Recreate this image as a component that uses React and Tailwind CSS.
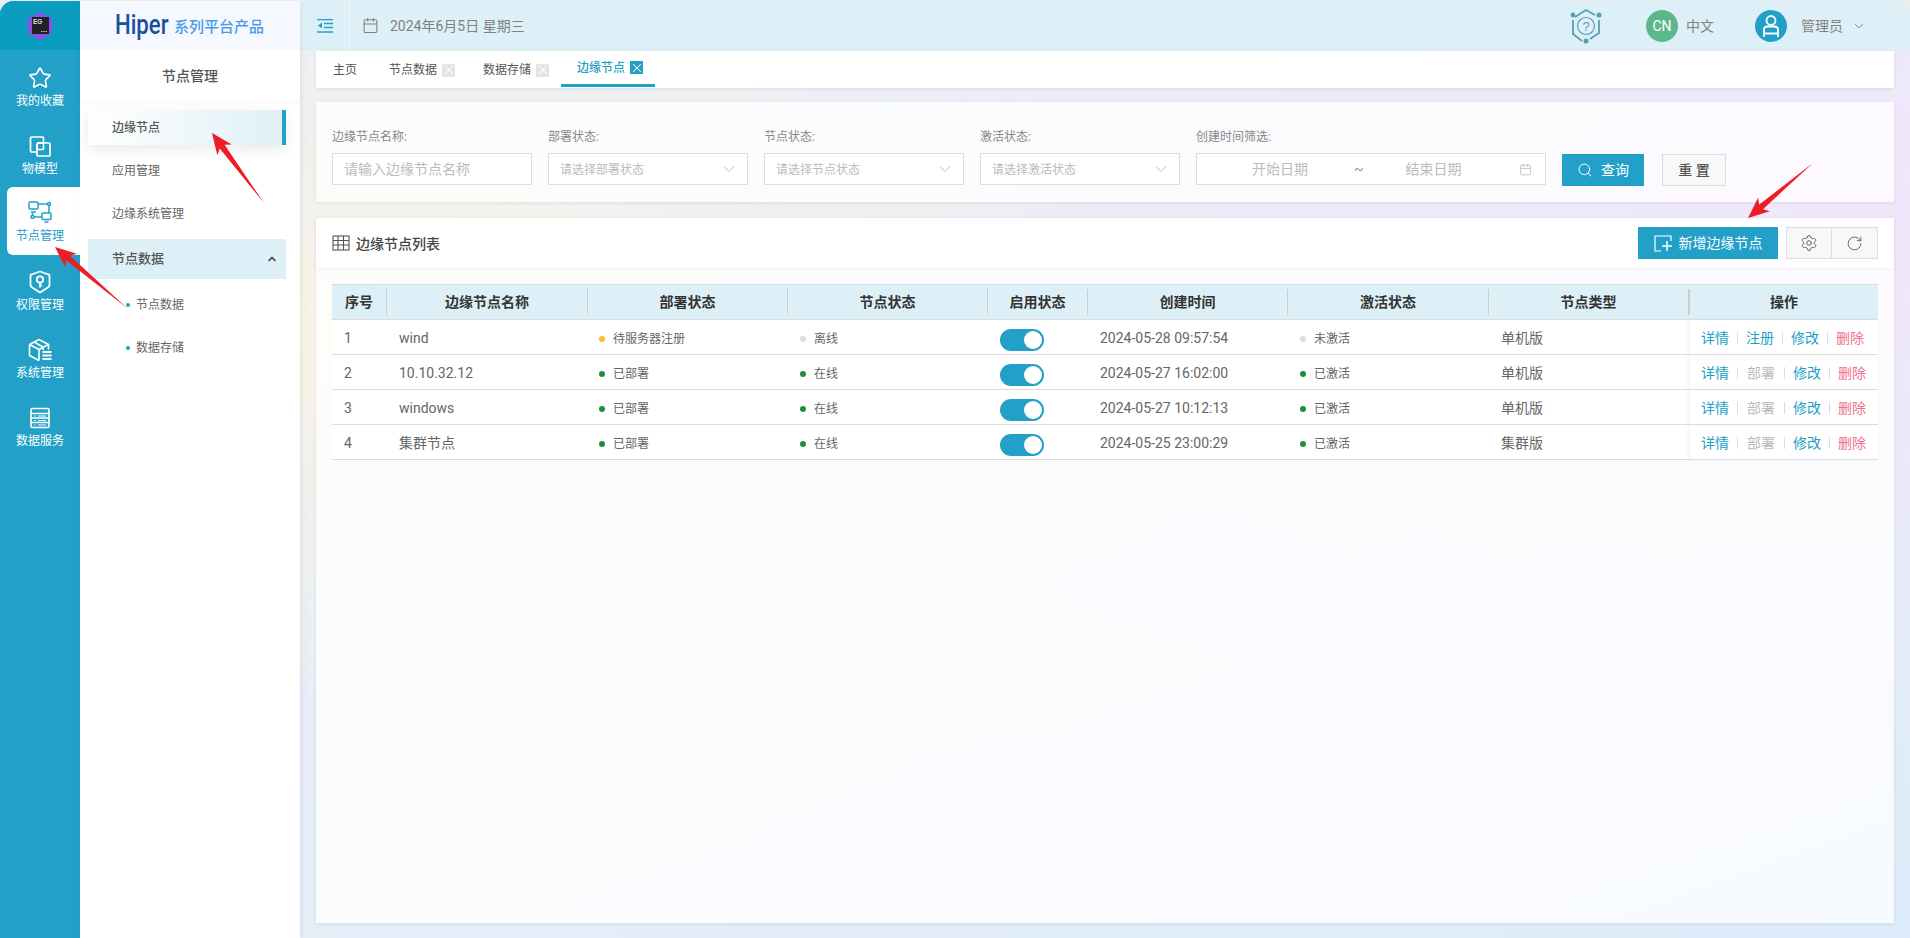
import { Star, ChevronDown, ChevronUp, Search, Settings, RotateCw, X, Calendar } from 'lucide-react';

const IconModel = () => (
  <svg width="24" height="24" viewBox="0 0 24 24" fill="none" stroke="currentColor" strokeWidth="1.7" strokeLinejoin="round">
    <path d="M9 18H3.500a1 1 0 0 1-1-1V4a1 1 0 0 1 1-1h11a1 1 0 0 1 1 1v5" />
    <path d="M9.500 9h11.500a1 1 0 0 1 1 1v11a1 1 0 0 1-1 1H10a1 1 0 0 1-1-1V10" />
    <rect x="9" y="9" width="6.500" height="6.500" rx="1" />
  </svg>
);

const IconNodes = () => (
  <svg width="24" height="24" viewBox="0 0 24 24" fill="none" stroke="currentColor" strokeWidth="1.5">
    <rect x="1" y="2" width="9" height="7" rx="1" />
    <path d="M3 12h5" />
    <path d="M5.500 9v1" />
    <path d="M10 4h10" />
    <circle cx="21" cy="4" r="1.500" />
    <path d="M21 6v7" />
    <rect x="14" y="13" width="9" height="6.500" rx="1" />
    <path d="M16.500 22h4" />
    <path d="M14 17H6" />
    <circle cx="4.500" cy="17" r="1.500" />
    <path d="M4.500 15.500v-3" />
  </svg>
);

const IconShield = () => (
  <svg width="24" height="24" viewBox="0 0 24 24" fill="none" stroke="currentColor" strokeWidth="1.8" strokeLinejoin="round">
    <path d="M12 1.500 20.500 4.500a1 1 0 0 1 1 1V15c0 1-.5 1.800-1.300 2.300L12 22.500 3.800 17.300C3 16.800 2.500 16 2.500 15V5.500a1 1 0 0 1 1-1Z" />
    <circle cx="12" cy="9.500" r="3.200" />
    <path d="M12 12.700V17.500M12 15.500h2" />
  </svg>
);

const IconCube = () => (
  <svg width="24" height="24" viewBox="0 0 24 24" fill="none" stroke="currentColor" strokeWidth="1.6" strokeLinejoin="round">
    <path d="M11 22.500 1.500 17.500V6.500L11 1.500l9.500 5v5" />
    <path d="M1.500 6.500 11 11.500l9.500-5" />
    <path d="M11 11.500v11" />
    <path d="M14.500 14h9M14.500 17.500h9M14.500 21h9" strokeWidth="1.800" />
    <path d="m6 4 9 5v3" />
  </svg>
);

const IconData = () => (
  <svg width="24" height="24" viewBox="0 0 24 24" fill="none" stroke="currentColor" strokeWidth="1.6">
    <rect x="3" y="2.500" width="18" height="19" rx="1.500" />
    <path d="M3 7.500h18M3 12h18M3 16.500h18" />
    <path d="M6 10h1.500M10 10h8M6 14.500h1.500M10 14.500h8M6 19h1.500M10 19h8" strokeWidth="1.200" />
  </svg>
);

const railItems = [
  { label: '我的收藏', icon: <Star size={24} strokeWidth={1.6} /> },
  { label: '物模型', icon: <IconModel /> },
  { label: '节点管理', icon: <IconNodes />, active: true },
  { label: '权限管理', icon: <IconShield /> },
  { label: '系统管理', icon: <IconCube /> },
  { label: '数据服务', icon: <IconData /> },
];

const Rail = () => (
  <div className="w-20 shrink-0 bg-[#22a0c8] flex flex-col">
    <div className="h-[49px] mb-px bg-[#0a9dbf] flex items-center justify-center">
      <svg width="24" height="28" viewBox="0 0 24 28">
        <polygon points="12,0 24,7 24,21 12,28 0,21 0,7" fill="#8b4fe8" />
        <rect x="4" y="5" width="17" height="17" fill="#222" />
        <text x="5" y="12" fontSize="6.500" fontWeight="700" fill="#ddd" fontFamily="Liberation Sans">EG</text>
        <path d="M13 19.500h6" stroke="#bbb" strokeWidth="1" strokeDasharray="1.500 .7" />
      </svg>
    </div>
    {railItems.map((item) => (
      <div
        key={item.label}
        className={
          item.active
            ? 'h-[68px] ml-[7px] pr-[7px] pt-[13px] bg-white rounded-l-md text-[#22a0c8] flex flex-col items-center'
            : 'h-[68px] pt-[15px] text-white flex flex-col items-center'
        }
      >
        {item.icon}
        <span className={item.active ? 'mt-1 text-xs leading-4' : 'mt-[3px] text-xs leading-4'}>{item.label}</span>
      </div>
    ))}
  </div>
);

const SubPanel = () => (
  <div className="w-[220px] shrink-0 bg-white flex flex-col relative z-10 shadow-[2px_0_6px_rgba(0,0,0,0.06)]">
    <div className="h-[49px] bg-[#f5f9ff] flex items-center pl-[35px]">
      <span className="w-[59px] text-[#1a4f9c] text-[27px] leading-none font-medium scale-x-[0.82] origin-left">Hiper</span>
      <span className="text-[15px] leading-none text-[#4c9be8] mt-1 font-medium">系列平台产品</span>
    </div>
    <div className="h-[51px] flex items-center justify-center text-sm font-medium text-[#555] shadow-[0_2px_4px_rgba(0,0,0,0.04)]">节点管理</div>
    <div className="flex flex-col gap-2 pl-2 pr-[14px] pt-[9px] text-xs text-[#666]">
      <div className="h-[35px] pl-6 flex items-center font-medium text-[#555] border-r-4 border-[#22a0c8] bg-gradient-to-r from-white to-[#dff0f6] shadow-[0_4px_14px_rgba(0,0,0,0.09)]">边缘节点</div>
      <div className="h-[35px] pl-6 flex items-center">应用管理</div>
      <div className="h-[35px] pl-6 flex items-center">边缘系统管理</div>
      <div className="h-10 pl-6 pr-[8px] flex items-center justify-between bg-[#def0f7] font-medium text-[13px] text-[#555]">
        节点数据
        <ChevronUp size={12} strokeWidth={3.5} className="text-[#444]" />
      </div>
      <div className="h-[35px] pl-[38px] flex items-center gap-[6px]">
        <span className="w-1 h-1 rounded-full bg-[#22a0c8]" />节点数据
      </div>
      <div className="h-[35px] pl-[38px] flex items-center gap-[6px]">
        <span className="w-1 h-1 rounded-full bg-[#22a0c8]" />数据存储
      </div>
    </div>
  </div>
);

const TopBar = () => (
  <div className="h-[49px] shrink-0 bg-[#def0f7] flex items-center text-sm text-[#808080]">
    <div className="w-[50px] h-full flex items-center justify-center border-r border-[#eaf6fa] pl-[1px]">
      <svg width="16" height="14" viewBox="0 0 16 14" fill="none" stroke="#22a0c8" strokeWidth="1.300">
        <path d="M0 .7h16M7 4.500h9M7 8.500h9M0 13h16" />
        <path d="M5 3.500v6L1 6.500Z" fill="#22a0c8" stroke="none" />
      </svg>
    </div>
    <Calendar size={17} strokeWidth={1.5} className="ml-3 text-[#808080]" />
    <span className="ml-[11px]">2024年6月5日 星期三</span>
    <div className="ml-auto flex items-center">
      <svg width="34" height="38" viewBox="0 0 34 38" fill="none" stroke="#5a9fb0" strokeWidth="1.800">
        <path d="M6 10 17 3l9 5M30 13v13l-9 6M13 34 4 27V13" />
        <circle cx="4" cy="8" r="1.500" fill="#5a9fb0" />
        <circle cx="30" cy="8" r="2.500" fill="#5a9fb0" stroke="none" />
        <circle cx="17" cy="34" r="2.500" fill="#5a9fb0" stroke="none" />
        <circle cx="17" cy="19" r="8.500" strokeWidth="1.200" />
        <text x="17" y="24" textAnchor="middle" fontSize="13" fill="#5a9fb0" stroke="none" fontFamily="Liberation Sans">?</text>
      </svg>
      <div className="ml-[43px] w-8 h-8 rounded-full bg-[#5cb88c] text-white flex items-center justify-center">CN</div>
      <span className="ml-2 w-[29px]">中文</span>
      <div className="ml-[40px] w-8 h-8 rounded-full bg-[#22a0c8] flex items-center justify-center">
        <svg width="20" height="24" viewBox="0 0 20 24" fill="none" stroke="white" strokeWidth="1.800">
          <circle cx="10" cy="6.500" r="4.500" />
          <path d="M3 23v-7c0-2 1.500-3.500 3.500-3.500h7c2 0 3.500 1.500 3.500 3.500v7" />
          <path d="M3 19.500h14" />
        </svg>
      </div>
      <span className="ml-[14px]">管理员</span>
      <ChevronDown size={16} strokeWidth={1.300} className="ml-2 mr-[43px]" />
    </div>
  </div>
);

const TabClose = ({ active }) => (
  <span className={active ? 'ml-[5px] w-[13px] h-[13px] bg-[#22a0c8] flex items-center justify-center' : 'ml-[5px] w-[13px] h-[13px] bg-[#e4e4e4] flex items-center justify-center'}>
    <X size={14} strokeWidth={1.800} className="text-white shrink-0" />
  </span>
);

const Tabs = () => (
  <div className="h-[37px] shrink-0 bg-white flex text-xs text-[#555] shadow-[0_1px_4px_rgba(0,0,0,0.08)]">
    <div className="pl-[17px] pr-4 pt-px flex items-center">主页</div>
    <div className="w-[94px] pl-4 pt-px flex items-center">节点数据<TabClose /></div>
    <div className="w-[94px] pl-4 pt-px flex items-center">数据存储<TabClose /></div>
    <div className="w-[94px] pl-4 flex items-center font-medium text-[#22a0c8] border-b-[3px] border-[#22a0c8] h-[36px]">边缘节点<TabClose active /></div>
  </div>
);

const Field = ({ label, width = 'w-[200px]', children }) => (
  <div className={width}>
    <div className="text-xs leading-4 pt-px mb-2 text-[#888] h-[17px]">{label}</div>
    {children}
  </div>
);

const SelectBox = ({ text }) => (
  <div className="h-8 bg-white border border-[#ddd] pl-[11px] pr-2 flex items-center justify-between text-xs text-[#bbb]">
    <span className="pt-px">{text}</span>
    <ChevronDown size={20} strokeWidth={1} className="text-[#aaa]" />
  </div>
);

const Filters = () => (
  <div className="h-[100px] shrink-0 mt-[14px] bg-white/80 pl-4 pt-[26px] flex shadow-[0_1px_4px_rgba(0,0,0,0.08)]">
    <div className="flex gap-4">
      <Field label="边缘节点名称:">
        <input
          placeholder="请输入边缘节点名称"
          className="w-full h-8 bg-white border border-[#ddd] px-[11px] text-sm placeholder:text-[#bbb] outline-none"
        />
      </Field>
      <Field label="部署状态:"><SelectBox text="请选择部署状态" /></Field>
      <Field label="节点状态:"><SelectBox text="请选择节点状态" /></Field>
      <Field label="激活状态:"><SelectBox text="请选择激活状态" /></Field>
      <Field label="创建时间筛选:" width="w-[350px]">
        <div className="h-8 bg-white border border-[#ddd] pl-[55px] pr-[13px] flex items-center text-sm text-[#bbb]">
          <span>开始日期</span>
          <span className="ml-[46px] text-[#999]">~</span>
          <span className="ml-[42px]">结束日期</span>
          <Calendar size={13} strokeWidth={1.500} className="ml-auto text-[#bbb]" />
        </div>
      </Field>
    </div>
    <button className="ml-4 mt-[26px] w-[82px] h-8 bg-[#22a0c8] text-white text-sm flex items-center justify-center gap-2">
      <Search size={16} strokeWidth={1.500} />查询
    </button>
    <button className="ml-[18px] mt-[26px] w-16 h-8 bg-[#f8f8f8] border border-[#ddd] text-sm text-[#555] font-medium">重 置</button>
  </div>
);

const GREEN = 'bg-[#1e8e3e]';
const rows = [
  { no: 1, name: 'wind', deploy: '待服务器注册', deployDot: 'bg-[#fbbc38]', node: '离线', nodeDot: 'bg-[#ddd]', time: '2024-05-28 09:57:54', act: '未激活', actDot: 'bg-[#ddd]', type: '单机版', op: '注册', opOn: true },
  { no: 2, name: '10.10.32.12', deploy: '已部署', deployDot: GREEN, node: '在线', nodeDot: GREEN, time: '2024-05-27 16:02:00', act: '已激活', actDot: GREEN, type: '单机版', op: '部署' },
  { no: 3, name: 'windows', deploy: '已部署', deployDot: GREEN, node: '在线', nodeDot: GREEN, time: '2024-05-27 10:12:13', act: '已激活', actDot: GREEN, type: '单机版', op: '部署' },
  { no: 4, name: '集群节点', deploy: '已部署', deployDot: GREEN, node: '在线', nodeDot: GREEN, time: '2024-05-25 23:00:29', act: '已激活', actDot: GREEN, type: '集群版', op: '部署' },
];

const columns = [
  ['序号', 'w-[55px]'],
  ['边缘节点名称', 'w-[201px]'],
  ['部署状态', 'w-[200px]'],
  ['节点状态', 'w-[200px]'],
  ['启用状态', 'w-[100px]'],
  ['创建时间', 'w-[200px]'],
  ['激活状态', 'w-[201px]'],
  ['节点类型', 'w-[201px]'],
  ['操作', 'w-[188px]'],
];

const Status = ({ dot, text }) => (
  <div className="flex items-center gap-2 text-xs">
    <span className={`w-[6px] h-[6px] rounded-full ${dot}`} />
    {text}
  </div>
);

const Sep = () => <span className="mx-2 w-px h-3 bg-[#ddd]" />;

const NodeTable = () => (
  <table className="w-[1546px] table-fixed border-collapse text-sm text-[#666]">
    <thead>
      <tr className="h-[35px] bg-[#def0f7] border-y border-[#d8dde2]">
        {columns.map(([title, width], i) => (
          <th key={title} className={`${width} p-0 font-bold text-[#333]`}>
            <div className={i === columns.length - 1 ? 'h-[26px] leading-[27px]' : i === 7 ? 'h-[26px] leading-[27px] border-r-[2px] border-[#ccc]' : 'h-[26px] leading-[27px] border-r border-[#ccc]'}>
              {title}
            </div>
          </th>
        ))}
      </tr>
    </thead>
    <tbody className="bg-white">
      {rows.map((row) => (
        <tr key={row.no} className="h-[35px] border-b border-[#ddd]">
          <td className="pl-3 pt-[2px]">{row.no}</td>
          <td className="pl-3 pt-[2px]">{row.name}</td>
          <td className="pl-[11px] pt-[3px]"><Status dot={row.deployDot} text={row.deploy} /></td>
          <td className="pl-3 pt-[3px]"><Status dot={row.nodeDot} text={row.node} /></td>
          <td className="pl-3 pt-[5px]">
            <div className="w-11 h-[22px] rounded-full bg-[#22a0c8] flex items-center justify-end pr-[2px]">
              <span className="w-[18px] h-[18px] rounded-full bg-white" />
            </div>
          </td>
          <td className="pl-3 pt-[2px]">{row.time}</td>
          <td className="pl-3 pt-[3px]"><Status dot={row.actDot} text={row.act} /></td>
          <td className="pl-3 pt-[2px]">{row.type}</td>
          <td className="pl-[11px] pt-[2px] shadow-[-2px_0_3px_rgba(0,0,0,0.05)]">
            <div className="flex items-center text-[#22a0c8]">
              详情<Sep />
              <span className={row.opOn ? '' : 'mx-px text-[#bbb]'}>{row.op}</span><Sep />
              修改<Sep />
              <span className="text-[#f0708a]">删除</span>
            </div>
          </td>
        </tr>
      ))}
    </tbody>
  </table>
);

const TablePanel = () => (
  <div className="h-[705px] shrink-0 mt-4 bg-white/80 shadow-[0_1px_4px_rgba(0,0,0,0.08)]">
    <div className="h-[50px] bg-white pl-4 pr-4 flex items-center shadow-[0_1px_3px_rgba(0,0,0,0.05)]">
      <svg width="18" height="16" viewBox="0 0 18 16" fill="none" stroke="#555" strokeWidth="1.100">
        <rect x="1" y="1" width="16" height="14" />
        <path d="M1 5.500h16M1 10h16M6 1v14M11.500 1v14" />
      </svg>
      <span className="ml-[6px] pt-px text-sm font-medium text-[#444]">边缘节点列表</span>
      <button className="ml-auto w-[140px] h-8 bg-[#22a0c8] text-white text-sm flex items-center justify-center gap-[7px]">
        <svg width="18" height="17" viewBox="0 0 18 17" fill="none" stroke="white" strokeWidth="1.200">
          <path d="M17 6V1H1v15h6" />
          <path d="M13 6v10M8 11h10" strokeWidth="1.500" />
        </svg>
        新增边缘节点
      </button>
      <button className="ml-2 w-[46px] h-8 bg-[#f8f8f8] border border-[#ddd] flex items-center justify-center text-[#555]">
        <Settings size={18} strokeWidth={1.200} />
      </button>
      <button className="w-[46px] h-8 bg-[#f8f8f8] border border-l-0 border-[#ddd] flex items-center justify-center text-[#555]">
        <RotateCw size={17} strokeWidth={1.200} />
      </button>
    </div>
    <div className="pl-4 pt-4">
      <NodeTable />
    </div>
  </div>
);

// shaft tapers from the tail up to the neck, then the barbs
const arrowPoints = (tailX, tailY, tipX, tipY) => {
  const dx = tipX - tailX;
  const dy = tipY - tailY;
  const len = Math.hypot(dx, dy);
  const ux = dx / len;
  const uy = dy / len;
  const nx = -uy;
  const ny = ux;
  const at = (back, side) => `${tipX - ux * back + nx * side},${tipY - uy * back + ny * side}`;
  return [at(len, 0), at(17, 3), at(21, 9), at(0, 0), at(21, -9), at(17, -3)].join(' ');
};

const Arrows = () => (
  <svg className="absolute inset-0 w-full h-full pointer-events-none z-20" fill="#ee1c25">
    <polygon points={arrowPoints(264, 203, 212, 133)} />
    <polygon points={arrowPoints(127, 308, 55, 247)} />
    <polygon points={arrowPoints(1813, 163, 1748, 218)} />
  </svg>
);

export default function App() {
  return (
    <div className="relative h-screen overflow-hidden bg-[#ececec] pt-px [font-family:'Roboto','Noto_Sans_CJK_SC',sans-serif]">
      <div className="h-full flex rounded-t-[14px] overflow-hidden">
        <Rail />
        <SubPanel />
        <div className="flex-1 flex flex-col min-w-0 bg-[radial-gradient(ellipse_at_0%_35%,#f8f3e6_0%,transparent_45%),radial-gradient(ellipse_at_100%_25%,#f0e6fb_0%,transparent_55%),linear-gradient(160deg,#eaeff8_0%,#e6eef8_60%,#dcebfa_100%)]">
          <TopBar />
          <div className="flex-1 pl-4 pr-4 pt-px flex flex-col">
            <Tabs />
            <Filters />
            <TablePanel />
          </div>
        </div>
      </div>
      <Arrows />
    </div>
  );
}
